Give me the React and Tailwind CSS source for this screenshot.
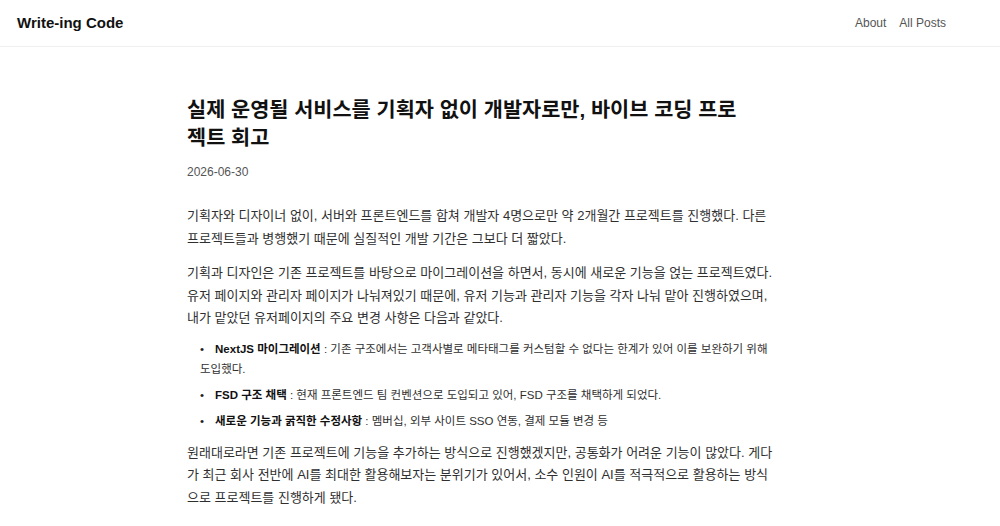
import React from "react";

const items = [
  {
    label: "NextJS 마이그레이션",
    text: (
      <>
        기존 구조에서는 고객사별로 메타태그를 커스텀할 수 없다는 한계가 있어 이를 보완하기 위해
        <br />
        도입했다.
      </>
    ),
  },
  {
    label: "FSD 구조 채택",
    text: "현재 프론트엔드 팀 컨벤션으로 도입되고 있어, FSD 구조를 채택하게 되었다.",
  },
  {
    label: "새로운 기능과 굵직한 수정사항",
    text: "멤버십, 외부 사이트 SSO 연동, 결제 모듈 변경 등",
  },
];

const Header = () => {
  return (
    <header className="flex h-[47px] items-center justify-between border-b border-[#efefef] pl-[17px] pr-[54px]">
      <a href="#" className="text-[15px] font-bold text-[#111]">
        Write-ing Code
      </a>
      <nav className="flex gap-[13px] text-[12px] text-[#555]">
        <a href="#">About</a>
        <a href="#">All Posts</a>
      </nav>
    </header>
  );
};

export default function App() {
  return (
    <div className="min-h-screen bg-white font-['Liberation_Sans','Noto_Sans_CJK_KR',sans-serif]">
      <Header />
      <main className="mx-auto max-w-[626px] pt-[49px]">
        <h1 className="text-[20.8px] font-bold leading-[28px] text-[#111]">
          실제 운영될 서비스를 기획자 없이 개발자로만, 바이브 코딩 프로
          <br />
          젝트 회고
        </h1>
        <p className="mt-[11px] text-[12px] leading-[18px] text-[#555]">2026-06-30</p>

        <article className="mt-[24px] text-[13px] leading-[22.5px] text-[#2f2f2f]">
          <p className="mb-[12px]">
            기획자와 디자이너 없이, 서버와 프론트엔드를 합쳐 개발자 4명으로만 약 2개월간 프로젝트를 진행했다. 다른
            <br />
            프로젝트들과 병행했기 때문에 실질적인 개발 기간은 그보다 더 짧았다.
          </p>
          <p className="mb-[9px]">
            기획과 디자인은 기존 프로젝트를 바탕으로 마이그레이션을 하면서, 동시에 새로운 기능을 얹는 프로젝트였다.
            <br />
            유저 페이지와 관리자 페이지가 나눠져있기 때문에, 유저 기능과 관리자 기능을 각자 나눠 맡아 진행하였으며,
            <br />
            내가 맡았던 유저페이지의 주요 변경 사항은 다음과 같았다.
          </p>
          <ul className="flex flex-col gap-[6px] pl-[13px] text-[11.5px] leading-[20px]">
            {items.map((item) => (
              <li key={item.label}>
                <span className="mr-[11px] text-[#222]">•</span>
                <strong className="font-bold text-[#111]">{item.label}</strong> : {item.text}
              </li>
            ))}
          </ul>
          <p className="mt-[11px]">
            원래대로라면 기존 프로젝트에 기능을 추가하는 방식으로 진행했겠지만, 공통화가 어려운 기능이 많았다. 게다
            <br />
            가 최근 회사 전반에 AI를 최대한 활용해보자는 분위기가 있어서, 소수 인원이 AI를 적극적으로 활용하는 방식
            <br />
            으로 프로젝트를 진행하게 됐다.
          </p>
        </article>
      </main>
    </div>
  );
}
